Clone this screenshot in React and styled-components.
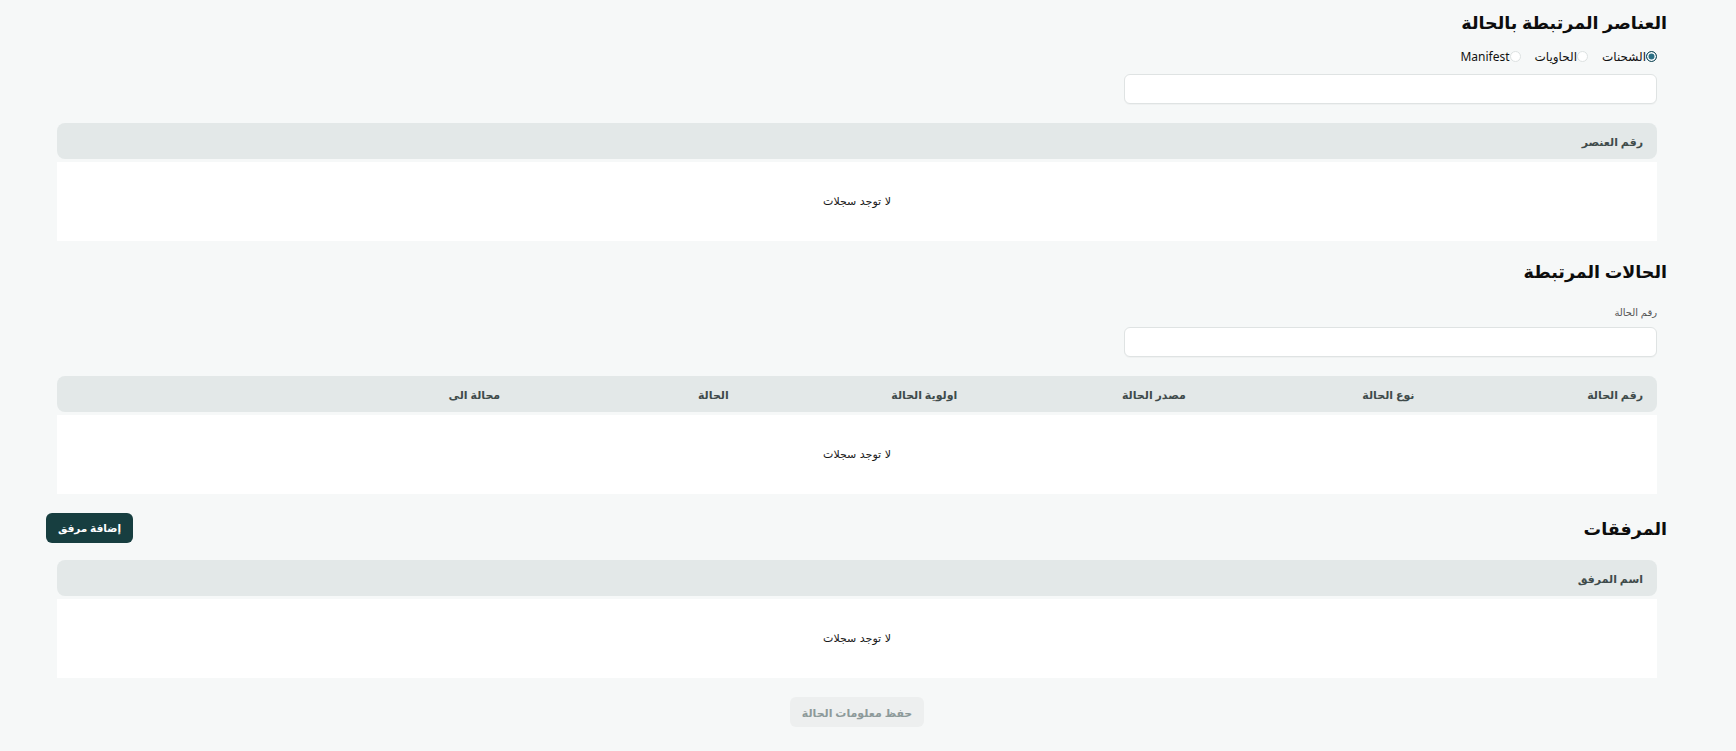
import styled, { createGlobalStyle } from "styled-components";

const GlobalStyle = createGlobalStyle`
  html, body {
    margin: 0;
    padding: 0;
    background: #f6f8f8;
  }
  body {
    font-family: "Noto Sans", "DejaVu Sans", sans-serif;
    color: #111;
  }
  * { box-sizing: border-box; }
`;

const Page = styled.div`
  direction: rtl;
  min-height: 751px;
  padding: 8px 79px 24px 57px;
  display: flex;
  flex-direction: column;
`;

const TitleRow = styled.div`
  display: flex;
  align-items: center;
  justify-content: space-between;
  margin: ${(p) => p.$top || 0}px -10px 0 -11px;
  min-height: 28px;
`;

const Title = styled.h2`
  margin: 0;
  font-size: 17.5px;
  line-height: 28px;
  font-weight: 700;
  color: #0d0d0d;
`;

const PrimaryButton = styled.button`
  height: 30px;
  padding: 0 12px;
  border: none;
  border-radius: 6px;
  background: #173e40;
  color: #fff;
  font-family: inherit;
  font-size: 10.5px;
  font-weight: 700;
  cursor: pointer;
`;

const RadioGroup = styled.div`
  display: flex;
  align-items: center;
  gap: 14px;
  margin-top: 12px;
  height: 16px;
`;

const RadioLabel = styled.label`
  display: flex;
  align-items: center;
  font-size: 12px;
  color: #111;
  cursor: pointer;
`;

const Radio = styled.input.attrs({ type: "radio" })`
  appearance: none;
  margin: 0;
  width: 11px;
  height: 11px;
  border-radius: 50%;
  border: 1px solid #dde2e2;
  background: #fff;
  &:checked {
    border-color: #1c4c5a;
    background: #2b6f84;
    box-shadow: inset 0 0 0 1.5px #fff;
  }
`;

const FieldLabel = styled.div`
  margin-top: 19px;
  font-size: 10px;
  line-height: 16px;
  color: #555;
`;

const Input = styled.input`
  display: block;
  width: 33.333%;
  height: 30px;
  margin-top: ${(p) => p.$top || 0}px;
  padding: 0 10px;
  border: 1px solid #dfe3e3;
  border-radius: 6px;
  background: #fff;
  box-shadow: 0 1px 1px rgba(0, 0, 0, 0.03);
  font-family: inherit;
  font-size: 12px;
  outline: none;
`;

const Table = styled.div`
  margin-top: ${(p) => p.$top || 19}px;
  display: flex;
  flex-direction: column;
  gap: 3px;
`;

const HeadRow = styled.div`
  display: grid;
  grid-template-columns: repeat(${(p) => p.$cols || 1}, 1fr);
  height: 36px;
  align-items: center;
  background: #e3e8e8;
  border-radius: 8px;
`;

const HeadCell = styled.div`
  padding: 0 14px;
  font-size: 11px;
  font-weight: 600;
  color: #3f4b4b;
  white-space: nowrap;
`;

const Body = styled.div`
  height: 79px;
  background: #fff;
  display: flex;
  align-items: center;
  justify-content: center;
`;

const Empty = styled.span`
  font-family: "DejaVu Sans", sans-serif;
  font-size: 11px;
  color: #1a1a1a;
`;

const Footer = styled.div`
  display: flex;
  justify-content: center;
  margin-top: 19px;
`;

const SaveButton = styled.button`
  height: 30px;
  padding: 0 12px;
  border: none;
  border-radius: 6px;
  background: #edefef;
  color: #8d9a9a;
  font-family: inherit;
  font-size: 11px;
  font-weight: 700;
  cursor: not-allowed;
`;

const DataTable = ({ columns, top }) => (
  <Table $top={top}>
    <HeadRow $cols={columns.length}>
      {columns.map((c, i) => (
        <HeadCell key={i}>{c}</HeadCell>
      ))}
    </HeadRow>
    <Body>
      <Empty>لا توجد سجلات</Empty>
    </Body>
  </Table>
);

const App = () => {
  return (
    <>
      <GlobalStyle />
      <Page>
        <TitleRow>
          <Title>العناصر المرتبطة بالحالة</Title>
        </TitleRow>
        <RadioGroup>
          <RadioLabel>
            <Radio name="kind" defaultChecked />
            الشحنات
          </RadioLabel>
          <RadioLabel>
            <Radio name="kind" />
            الحاويات
          </RadioLabel>
          <RadioLabel>
            <Radio name="kind" />
            Manifest
          </RadioLabel>
        </RadioGroup>
        <Input $top={10} />
        <DataTable columns={["رقم العنصر"]} />

        <TitleRow $top={16}>
          <Title>الحالات المرتبطة</Title>
        </TitleRow>
        <FieldLabel>رقم الحالة</FieldLabel>
        <Input $top={7} />
        <DataTable
          columns={[
            "رقم الحالة",
            "نوع الحالة",
            "مصدر الحالة",
            "اولوية الحالة",
            "الحالة",
            "محالة الى",
            "",
          ]}
        />

        <TitleRow $top={19}>
          <Title>المرفقات</Title>
          <PrimaryButton>إضافة مرفق</PrimaryButton>
        </TitleRow>
        <DataTable columns={["اسم المرفق"]} top={17} />

        <Footer>
          <SaveButton disabled>حفظ معلومات الحالة</SaveButton>
        </Footer>
      </Page>
    </>
  );
};

export default App;
